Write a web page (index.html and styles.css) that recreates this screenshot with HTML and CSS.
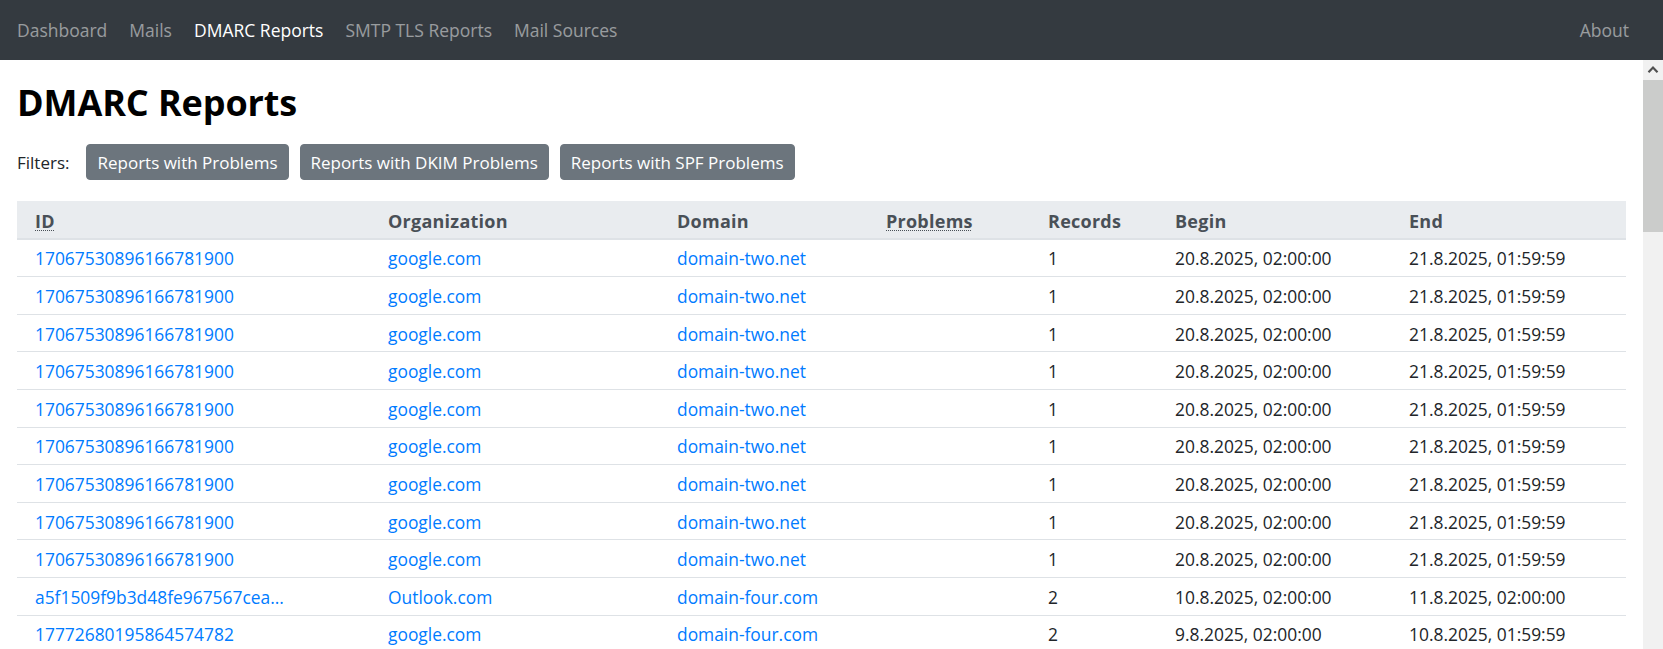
FILE: index.html
```html
<!DOCTYPE html>
<html lang="en">
<head>
<meta charset="utf-8">
<title>DMARC Reports</title>
<link rel="stylesheet" href="styles.css">
</head>
<body>
<nav class="navbar">
  <div class="nav-left">
    <a class="nav-link" href="#">Dashboard</a>
    <a class="nav-link" href="#">Mails</a>
    <a class="nav-link active" href="#">DMARC Reports</a>
    <a class="nav-link" href="#">SMTP TLS Reports</a>
    <a class="nav-link" href="#">Mail Sources</a>
  </div>
  <a class="nav-link" href="#">About</a>
</nav>
<div class="viewport">
  <main class="content">
    <h2 class="title">DMARC Reports</h2>
    <div class="filters">
      <span class="filters-label">Filters:</span>
      <button class="btn">Reports with Problems</button>
      <button class="btn">Reports with DKIM Problems</button>
      <button class="btn">Reports with SPF Problems</button>
    </div>
    <table class="reports">
      <thead>
        <tr>
          <th class="c-id"><abbr title="Report ID">ID</abbr></th>
          <th class="c-org">Organization</th>
          <th class="c-domain">Domain</th>
          <th class="c-problems"><abbr title="Problems">Problems</abbr></th>
          <th class="c-records">Records</th>
          <th class="c-begin">Begin</th>
          <th class="c-end">End</th>
        </tr>
      </thead>
      <tbody>
        <tr><td><a href="#">17067530896166781900</a></td><td><a href="#">google.com</a></td><td><a href="#">domain-two.net</a></td><td></td><td>1</td><td>20.8.2025, 02:00:00</td><td>21.8.2025, 01:59:59</td></tr>
        <tr><td><a href="#">17067530896166781900</a></td><td><a href="#">google.com</a></td><td><a href="#">domain-two.net</a></td><td></td><td>1</td><td>20.8.2025, 02:00:00</td><td>21.8.2025, 01:59:59</td></tr>
        <tr><td><a href="#">17067530896166781900</a></td><td><a href="#">google.com</a></td><td><a href="#">domain-two.net</a></td><td></td><td>1</td><td>20.8.2025, 02:00:00</td><td>21.8.2025, 01:59:59</td></tr>
        <tr><td><a href="#">17067530896166781900</a></td><td><a href="#">google.com</a></td><td><a href="#">domain-two.net</a></td><td></td><td>1</td><td>20.8.2025, 02:00:00</td><td>21.8.2025, 01:59:59</td></tr>
        <tr><td><a href="#">17067530896166781900</a></td><td><a href="#">google.com</a></td><td><a href="#">domain-two.net</a></td><td></td><td>1</td><td>20.8.2025, 02:00:00</td><td>21.8.2025, 01:59:59</td></tr>
        <tr><td><a href="#">17067530896166781900</a></td><td><a href="#">google.com</a></td><td><a href="#">domain-two.net</a></td><td></td><td>1</td><td>20.8.2025, 02:00:00</td><td>21.8.2025, 01:59:59</td></tr>
        <tr><td><a href="#">17067530896166781900</a></td><td><a href="#">google.com</a></td><td><a href="#">domain-two.net</a></td><td></td><td>1</td><td>20.8.2025, 02:00:00</td><td>21.8.2025, 01:59:59</td></tr>
        <tr><td><a href="#">17067530896166781900</a></td><td><a href="#">google.com</a></td><td><a href="#">domain-two.net</a></td><td></td><td>1</td><td>20.8.2025, 02:00:00</td><td>21.8.2025, 01:59:59</td></tr>
        <tr><td><a href="#">17067530896166781900</a></td><td><a href="#">google.com</a></td><td><a href="#">domain-two.net</a></td><td></td><td>1</td><td>20.8.2025, 02:00:00</td><td>21.8.2025, 01:59:59</td></tr>
        <tr><td><a href="#">a5f1509f9b3d48fe967567cea...</a></td><td><a href="#">Outlook.com</a></td><td><a href="#">domain-four.com</a></td><td></td><td>2</td><td>10.8.2025, 02:00:00</td><td>11.8.2025, 02:00:00</td></tr>
        <tr><td><a href="#">17772680195864574782</a></td><td><a href="#">google.com</a></td><td><a href="#">domain-four.com</a></td><td></td><td>2</td><td>9.8.2025, 02:00:00</td><td>10.8.2025, 01:59:59</td></tr>
      </tbody>
    </table>
  </main>
  <div class="scrollbar">
    <div class="sb-arrow">
      <svg width="20" height="20" viewBox="0 0 20 20"><path d="M5.5 12.2 L10 7.5 L14.5 12.2" fill="none" stroke="#505050" stroke-width="2.2" stroke-linejoin="miter"/></svg>
    </div>
    <div class="sb-thumb"></div>
    <div class="sb-track"></div>
  </div>
</div>
</body>
</html>
```
FILE: styles.css
```css
html, body {
  margin: 0;
  height: 100%;
}

body {
  font-family: "Open Sans", "Noto Sans", "Liberation Sans", sans-serif;
  font-size: 17.4px;
  line-height: 27px;
  color: #212529;
  background: #fff;
  display: flex;
  flex-direction: column;
  overflow: hidden;
}

/* ---------- navbar ---------- */
.navbar {
  flex: none;
  height: 60px;
  background: #343a40;
  display: flex;
  align-items: center;
  justify-content: space-between;
  padding: 0 34px 0 17px;
  font-size: 17.5px;
}

.nav-left {
  display: flex;
  gap: 22px;
}

.nav-link {
  color: rgba(255, 255, 255, 0.5);
  text-decoration: none;
}

.nav-link.active {
  color: #fff;
}

/* ---------- layout ---------- */
.viewport {
  flex: 1;
  min-height: 0;
  display: flex;
}

.content {
  flex: 1;
  min-width: 0;
  padding: 18px 17px 0;
  overflow: hidden;
}

.title {
  margin: 0;
  font-size: 36px;
  line-height: 49px;
  font-weight: 700;
  letter-spacing: -0.1px;
  color: #000;
}

/* ---------- filters ---------- */
.filters {
  display: flex;
  align-items: center;
  margin-top: 17px;
}

.filters-label {
  margin-right: 17px;
  font-size: 17px;
}

.btn {
  font-family: inherit;
  font-size: 17px;
  line-height: 27px;
  color: #fff;
  background: #6c757d;
  border: 1px solid #6c757d;
  border-radius: 4px;
  padding: 4px 10px 3px;
  margin-right: 11px;
  cursor: pointer;
}

/* ---------- table ---------- */
.reports {
  width: 100%;
  margin-top: 21px;
  border-collapse: collapse;
  table-layout: fixed;
}

.reports th,
.reports td {
  box-sizing: border-box;
  text-align: left;
  line-height: 27px;
  white-space: nowrap;
}

.reports th {
  padding: 6.8px 18px 2.8px;
  font-size: 18px;
  letter-spacing: 0.25px;
  background: #e9ecef;
  color: #495057;
  font-weight: 700;
  border-bottom: 2px solid #dee2e6;
}

.reports td {
  padding: 5.8px 18px 3.8px;
  border-top: 1px solid #dee2e6;
}

.reports a {
  color: #007bff;
  text-decoration: none;
}

.reports abbr {
  text-decoration: underline dotted;
  text-decoration-thickness: 1px;
  text-underline-offset: 2px;
}

.c-id { width: 353px; }
.c-org { width: 289px; }
.c-domain { width: 209px; }
.c-problems { width: 162px; }
.c-records { width: 127px; }
.c-begin { width: 234px; }
.c-end { width: auto; }

/* ---------- scrollbar ---------- */
.scrollbar {
  flex: none;
  width: 20px;
  display: flex;
  flex-direction: column;
  background: #f1f1f1;
}

.sb-arrow {
  height: 20px;
  display: flex;
}

.sb-thumb {
  height: 152px;
  background: #cbcccb;
}

.sb-track {
  flex: 1;
}
```
